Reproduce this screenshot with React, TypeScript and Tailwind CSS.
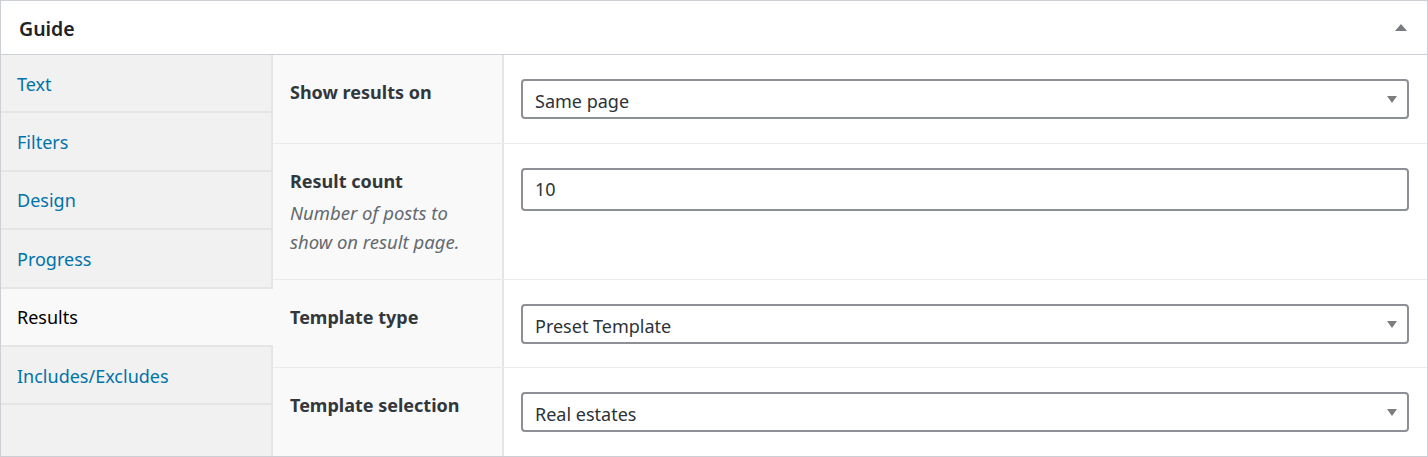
import React from 'react';

type Tab = { label: string; active?: boolean };

const tabs: Tab[] = [
  { label: 'Text' },
  { label: 'Filters' },
  { label: 'Design' },
  { label: 'Progress' },
  { label: 'Results', active: true },
  { label: 'Includes/Excludes' },
];

const Caret = ({ up = false }: { up?: boolean }) => (
  <svg width={up ? 12 : 10} height="7" viewBox={up ? '0 0 12 7' : '0 0 10 7'} className="shrink-0">
    {up ? <polygon points="6,0 12,7 0,7" fill="#787c82" /> : <polygon points="0,0 10,0 5,7" fill="#7c7c7c" />}
  </svg>
);

const Select = ({ value }: { value: string }) => (
  <div className="h-[40px] w-full border-2 border-[#8c8f94] rounded-[4px] bg-white flex items-center justify-between pl-[12px] pr-[10px]">
    <span className="text-[18px] leading-[24px] pt-[3px] text-[#2c3338]">{value}</span>
    <Caret />
  </div>
);

const Row = ({
  label,
  desc,
  height,
  children,
}: {
  label: string;
  desc?: string[];
  height: string;
  children: React.ReactNode;
}) => (
  <div className={`flex ${height} border-b border-[#ebebeb] last:border-b-0`}>
    <div className="w-[231px] shrink-0 bg-[#f9f9f9] border-r-2 border-[#e5e5e5] pl-[17px] pt-[25px]">
      <div className="text-[18px] leading-[24px] font-bold text-[#32373c]">{label}</div>
      {desc && (
        <div className="mt-[5px] text-[18.5px] leading-[29px] italic text-[#646970]">
          {desc.map((d) => (
            <div key={d}>{d}</div>
          ))}
        </div>
      )}
    </div>
    <div className="flex-1 pl-[17px] pr-[18px] pt-[24px]">{children}</div>
  </div>
);

export default function App() {
  return (
    <div className="w-[1428px] h-[457px] bg-white border border-[#ccd0d4] flex flex-col font-['Noto_Sans',sans-serif]">
      <div className="h-[54px] shrink-0 border-b border-[#ccd0d4] flex items-center justify-between pl-[18px] pr-[20px]">
        <span className="text-[19.5px] leading-[26px] pt-[2px] font-semibold text-[#1d2327]">Guide</span>
        <Caret up />
      </div>
      <div className="flex flex-1 min-h-0">
        <div className="w-[272px] shrink-0 bg-[#f1f1f1] flex flex-col">
          {tabs.map((t) => (
            <div
              key={t.label}
              className={
                t.active
                  ? 'h-[58.4px] shrink-0 bg-[#f9f9f9] border-b-2 border-[#e5e5e5] flex items-center pl-[16px] pt-[2px] text-[18px] text-[#000000]'
                  : 'h-[58.4px] shrink-0 border-b-2 border-r-2 border-[#e5e5e5] flex items-center pl-[16px] pt-[2px] text-[18px] text-[#0073aa]'
              }
            >
              {t.label}
            </div>
          ))}
          <div className="flex-1 border-r-2 border-[#e5e5e5]" />
        </div>
        <div className="flex-1 flex flex-col">
          <Row label="Show results on" height="h-[89px]">
            <Select value="Same page" />
          </Row>
          <Row label="Result count" desc={['Number of posts to', 'show on result page.']} height="h-[136px]">
            <div className="h-[43px] w-full border-2 border-[#8c8f94] rounded-[4px] bg-white flex items-center pl-[12px]">
              <span className="text-[18px] text-[#2c3338]">10</span>
            </div>
          </Row>
          <Row label="Template type" height="h-[88px]">
            <Select value="Preset Template" />
          </Row>
          <Row label="Template selection" height="flex-1">
            <Select value="Real estates" />
          </Row>
        </div>
      </div>
    </div>
  );
}
